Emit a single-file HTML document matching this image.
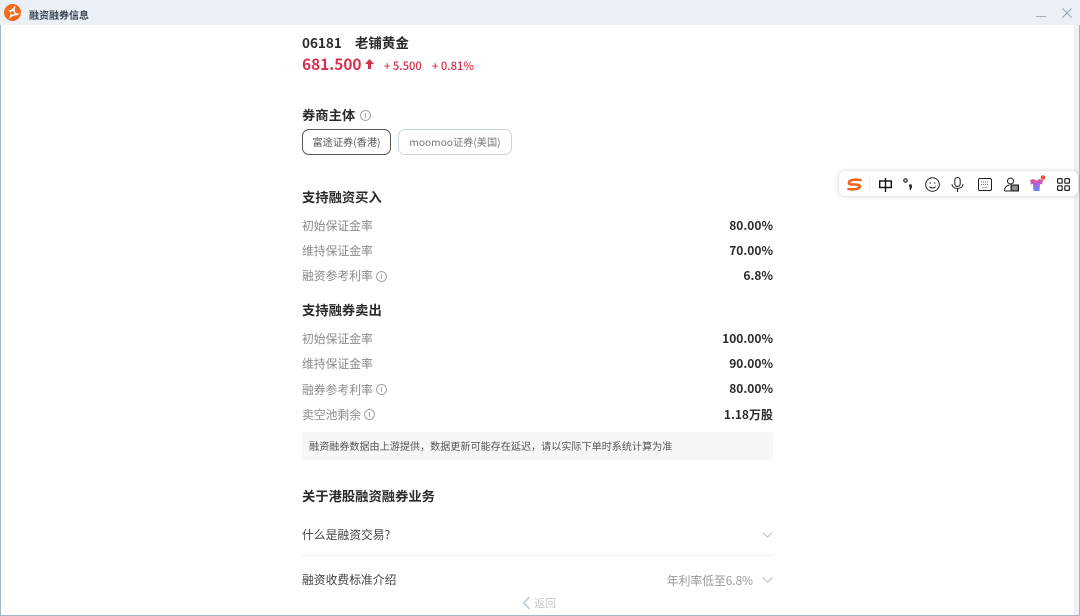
<!DOCTYPE html>
<html lang="zh"><head><meta charset="utf-8"><title>融资融券信息</title>
<style>
html,body{margin:0;padding:0;width:1080px;height:616px;overflow:hidden;background:#fff}
body{font-family:"Noto Sans CJK SC","Liberation Sans",sans-serif;color:#2b2b2b;position:relative}
.a{position:absolute;white-space:nowrap;line-height:20px}
.l{left:302px;font-size:11.8px;color:#8a8a8a}
.r{right:307px;font-size:12px;font-weight:700;color:#2b2b2b}
.h{left:302px;font-size:13.3px;font-weight:700;color:#2b2b2b}
.i{position:absolute;width:9px;height:9px;border:1px solid #a5a5a5;border-radius:50%}
.i:after{content:"";position:absolute;left:4px;top:2px;width:1px;height:5px;background:#a5a5a5}
svg{position:absolute;overflow:visible}
</style></head><body>
<div style="position:absolute;left:0;top:0;width:1080px;height:25px;background:#eaf0f6"></div>
<div style="position:absolute;left:0;top:25px;width:1px;height:591px;background:#a8b3c4"></div>
<div style="position:absolute;right:0;top:25px;width:1px;height:591px;background:#a8b3c4"></div>
<div style="position:absolute;left:0;bottom:0;width:1080px;height:1px;background:#a8b3c4"></div>
<div style="position:absolute;left:1074px;top:25px;width:5px;height:590px;background:#eef0f3"></div>
<svg style="left:4px;top:4px" width="17" height="17" viewBox="0 0 17 17"><circle cx="8.5" cy="8.5" r="8.5" fill="#f26a1b"/><path d="M1 6C4 6.500 6 7 7 9L5 15C6.500 13.500 8 12 10.500 11.500C12.500 11.500 14.500 11 16 9.500C14 10 12 9.500 10.800 7.500C10.800 5.500 11 3.500 12 1.500C10 3 8.500 5 6.800 6C5 6.500 3 6.500 1 6Z" fill="#fff"/><circle cx="8.700" cy="8.900" r="1.700" fill="#f26a1b"/></svg>
<div class="a" style="left:29px;top:5px;font-size:10px;font-weight:700;color:#3c4654">融资融券信息</div>
<svg style="left:1036px;top:16px" width="10" height="2"><rect width="10" height="1" fill="#9fb0c6"/></svg>
<svg style="left:1062px;top:8px" width="10" height="10" viewBox="0 0 10 10"><path d="M.5.5 9.500 9.500M9.500.5.5 9.500" stroke="#8fa2bb" stroke-width="1" fill="none"/></svg>

<div class="a" style="left:302px;top:32px;font-size:13.500px;font-weight:700;word-spacing:10px">06181 老铺黄金</div>
<div class="a" style="left:302px;top:53px;font-size:15.400px;font-weight:700;color:#d9304f;line-height:22px">681.500</div>
<svg style="left:365px;top:59px" width="9" height="10" viewBox="0 0 9 10"><path d="M4.500 0 9 5H6V10H3V5H0Z" fill="#d9304f"/></svg>
<div class="a" style="left:384px;top:56px;font-size:11.200px;font-weight:500;color:#d9304f">+ 5.500</div>
<div class="a" style="left:432px;top:56px;font-size:11.200px;font-weight:500;color:#d9304f">+ 0.81%</div>

<div class="a h" style="top:105px">券商主体</div>
<div class="i" style="left:360px;top:110px"></div>
<div class="a" style="left:302px;top:129px;width:87px;height:24px;border:1px solid #555;border-radius:7px;font-size:10.200px;line-height:24px;text-align:center;color:#555">富途证券(香港)</div>
<div class="a" style="left:398px;top:129px;width:112px;height:24px;border:1px solid #ccd5e2;border-radius:7px;font-size:10.200px;line-height:24px;text-align:center;color:#777">moomoo证券(美国)</div>

<div class="a h" style="top:187px">支持融资买入</div>
<div class="a l" style="top:216px">初始保证金率</div><div class="a r" style="top:216px">80.00%</div>
<div class="a l" style="top:241px">维持保证金率</div><div class="a r" style="top:241px">70.00%</div>
<div class="a l" style="top:266px">融资参考利率</div><div class="i" style="left:376px;top:271px"></div><div class="a r" style="top:266px">6.8%</div>

<div class="a h" style="top:300px">支持融券卖出</div>
<div class="a l" style="top:329px">初始保证金率</div><div class="a r" style="top:329px">100.00%</div>
<div class="a l" style="top:354px">维持保证金率</div><div class="a r" style="top:354px">90.00%</div>
<div class="a l" style="top:380px">融券参考利率</div><div class="i" style="left:376px;top:384px"></div><div class="a r" style="top:379px">80.00%</div>
<div class="a l" style="top:405px">卖空池剩余</div><div class="i" style="left:364px;top:409px"></div><div class="a r" style="top:405px">1.18万股</div>

<div class="a" style="left:302px;top:432px;width:464px;height:28px;padding-left:7px;background:#f7f7f7;border-radius:3px;font-size:10.100px;line-height:28px;color:#555">融资融券数据由上游提供，数据更新可能存在延迟，请以实际下单时系统计算为准</div>

<div class="a h" style="top:486px">关于港股融资融券业务</div>
<div class="a" style="left:302px;top:525px;font-size:11.800px;color:#444">什么是融资交易?</div>
<svg style="left:762px;top:532px" width="11" height="6" viewBox="0 0 12 7"><path d="M.5.5 6 6 11.500.5" stroke="#b0b0b0" fill="none"/></svg>
<div style="position:absolute;left:302px;top:555px;width:471px;height:1px;background:#f0f0f0"></div>
<div class="a" style="left:302px;top:570px;font-size:11.800px;color:#444">融资收费标准介绍</div>
<div class="a" style="right:327px;top:571px;font-size:11.800px;color:#999">年利率低至6.8%</div>
<svg style="left:762px;top:577px" width="11" height="6" viewBox="0 0 12 7"><path d="M.5.5 6 6 11.500.5" stroke="#b0b0b0" fill="none"/></svg>
<svg style="left:522px;top:596px" width="9" height="14" viewBox="0 0 9 14"><path d="M7.500 1 2 7l5.500 6" stroke="#c3d0e0" stroke-width="2" fill="none"/></svg>
<div class="a" style="left:534px;top:593px;font-size:11px;color:#c4c8cf">返回</div>

<div style="position:absolute;left:839px;top:171px;width:239px;height:25px;background:#fff;border-radius:6px;box-shadow:0 0 5px rgba(0,0,0,.2)"></div>
<svg style="left:847px;top:178px" width="15" height="13" viewBox="0 0 15 13"><path d="M13.500 2C9 1.500 3 1.500 2 4.300C1.500 6.500 4 6.500 7 6.500C10 6.500 13 6.800 12.800 8.700C12 11.500 6 11.500 1.500 11" stroke="#f0641e" stroke-width="2.600" fill="none" stroke-linecap="round"/></svg>
<div style="position:absolute;left:869px;top:177px;width:1px;height:14px;background:#eee"></div>
<svg style="left:879px;top:178px" width="13" height="14" viewBox="0 0 13 14" fill="none" stroke="#111" stroke-width="1.400"><rect x=".7" y="3" width="11.600" height="6.500"/><path d="M6.500 0V14"/></svg>
<svg style="left:903px;top:178px" width="11" height="14" viewBox="0 0 11 14"><circle cx="2.500" cy="2.500" r="1.700" fill="none" stroke="#222" stroke-width="1.200"/><path d="M6 7h2.400v2.500L7 12" fill="#222" stroke="#222"/></svg>
<svg style="left:925px;top:177px" width="15" height="15" viewBox="0 0 15 15" fill="none" stroke="#222"><circle cx="7.500" cy="7.500" r="6.800"/><path d="M4.500 9.500c1 2 5 2 6 0M4.500 6h1.500M9 6h1.500"/></svg>
<svg style="left:951px;top:177px" width="13" height="15" viewBox="0 0 13 15" fill="none" stroke="#222"><rect x="3.800" y=".5" width="5.400" height="9" rx="2.700"/><path d="M1 7c0 6 11 6 11 0M6.500 12v3"/></svg>
<svg style="left:978px;top:178px" width="14" height="13" viewBox="0 0 14 13" fill="none" stroke="#222"><rect x=".5" y=".5" width="13" height="12" rx="1.500"/><path d="M3 4h8M3 6.500h8M4.500 9.500h5" stroke="#777" stroke-dasharray="1 1"/></svg>
<svg style="left:1004px;top:177px" width="15" height="15" viewBox="0 0 15 15" fill="none" stroke="#222"><circle cx="6.500" cy="4" r="3"/><path d="M.5 14c0-4 2-5.500 5-6M.5 14h6"/><rect x="7" y="8" width="7.500" height="6" fill="#666"/><path d="M8.500 10h4.500M8.500 12h4.500" stroke="#ddd" stroke-width=".8"/></svg>
<svg style="left:1029px;top:175px" width="17" height="17" viewBox="0 0 17 17"><defs><linearGradient id="g" x1="0" y1="0" x2="0" y2="1"><stop offset="0" stop-color="#ee4f7a"/><stop offset=".5" stop-color="#a864e8"/><stop offset="1" stop-color="#5f8ff5"/></linearGradient></defs><path d="M1 5 5 4C6 6 9 6 10 4L14 5 13 9.500 11 9 10.500 16H4.500L4 9 2 9.500Z" fill="url(#g)"/><circle cx="14" cy="2.500" r="2.300" fill="#f0552a"/></svg>
<svg style="left:1057px;top:178px" width="13" height="13" viewBox="0 0 13 13" fill="none" stroke="#222" stroke-width="1.200"><rect x=".6" y=".6" width="4.600" height="4.600" rx="1"/><rect x="7.800" y=".6" width="4.600" height="4.600" rx="1"/><rect x=".6" y="7.800" width="4.600" height="4.600" rx="1"/><rect x="7.800" y="7.800" width="4.600" height="4.600" rx="1"/></svg>
</body></html>
